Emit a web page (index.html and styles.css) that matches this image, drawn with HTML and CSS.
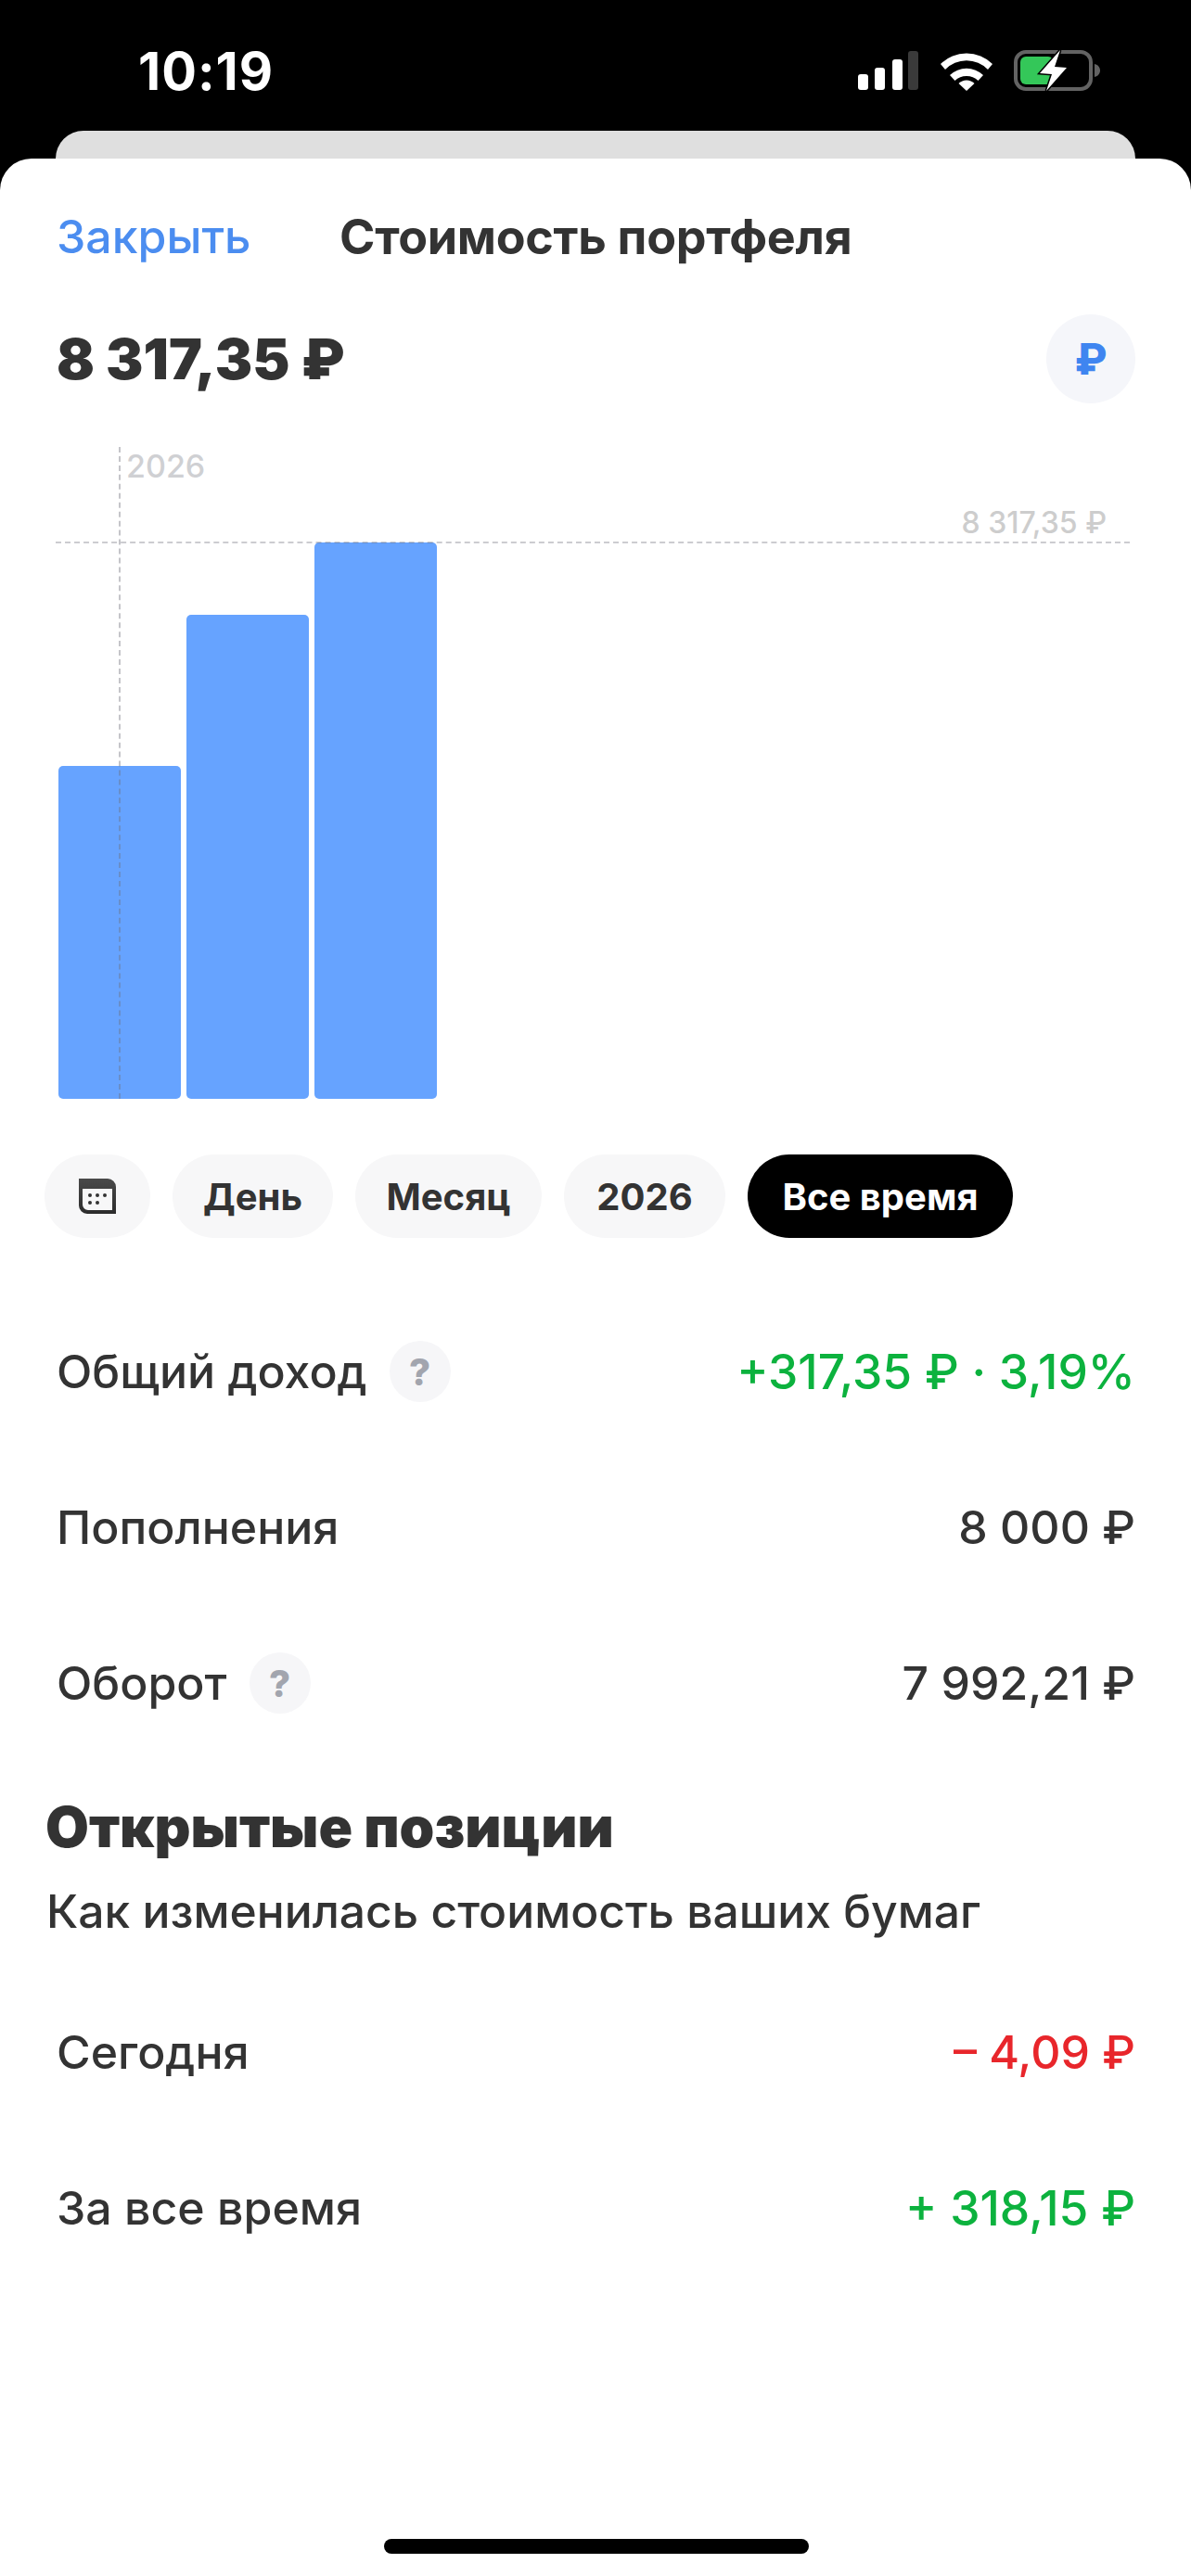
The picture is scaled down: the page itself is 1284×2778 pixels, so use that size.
FILE: index.html
```html
<!DOCTYPE html>
<html lang="ru">
<head>
    <meta charset="UTF-8">
    <meta name="viewport" content="width=device-width, initial-scale=1.0">
    <title>Стоимость портфеля</title>
    <link rel="stylesheet" href="styles.css">
</head>
<body>

    <!-- Status bar -->
    <div class="status-bar">
        <span class="status-time">10:19</span>
        <div class="status-icons">
            <svg class="signal-icon" width="65" height="42" viewBox="0 0 65 42">
                <rect x="0" y="25" width="11" height="17" rx="3" fill="#fff"/>
                <rect x="18" y="18" width="11" height="24" rx="3" fill="#fff"/>
                <rect x="37" y="9" width="11" height="33" rx="3" fill="#fff"/>
                <rect x="54" y="0" width="11" height="42" rx="3" fill="#3a3a3a"/>
            </svg>
            <svg class="wifi-icon" width="58" height="44" viewBox="0 0 58 44">
                <path d="M1 15 A40 40 0 0 1 57 15 L52 21 A32 32 0 0 0 6 21 Z" fill="#fff"/>
                <path d="M11 27 A26 26 0 0 1 47 27 L41.500 33 A18 18 0 0 0 16.500 33 Z" fill="#fff"/>
                <path d="M20.500 36 A12 12 0 0 1 37.500 36 L29 44 Z" fill="#fff"/>
            </svg>
            <svg class="battery-icon" width="96" height="46" viewBox="0 0 96 46">
                <rect x="2" y="3" width="81" height="40" rx="11" fill="none" stroke="#636363" stroke-width="4"/>
                <rect x="7" y="8" width="36" height="30" rx="6" fill="#34c759"/>
                <path d="M87 16 C91 17 93 20 93 23 C93 26 91 29 87 30 Z" fill="#636363"/>
                <path d="M50 1 L28 26 L41 27 L35 45 L57 20 L44 19 Z" fill="#fff" stroke="#000" stroke-width="3" paint-order="stroke"/>
            </svg>
        </div>
    </div>

    <div class="back-card"></div>

    <div class="sheet">
        <!-- Header -->
        <div class="sheet-header">
            <span class="close-link">Закрыть</span>
            <span class="sheet-title">Стоимость портфеля</span>
        </div>

        <div class="summary">
            <span class="summary-amount">8 317,35 ₽</span>
            <div class="currency-btn">₽</div>
        </div>

        <!-- Chart -->
        <div class="chart">
            <div class="chart-bars">
                <div class="chart-bar" style="height: 359px"></div>
                <div class="chart-bar" style="height: 522px"></div>
                <div class="chart-bar" style="height: 600px"></div>
            </div>
            <div class="chart-line-v"></div>
            <div class="chart-line-h"></div>
            <span class="chart-year">2026</span>
            <span class="chart-value">8 317,35 ₽</span>
        </div>

        <!-- Period chips -->
        <div class="chips">
            <div class="chip chip-icon">
                <svg width="40" height="38" viewBox="0 0 40 38">
                    <defs>
                        <linearGradient id="calendar-top" x1="0" y1="0" x2="0" y2="1">
                            <stop offset="0" stop-color="#4a4a4a"/>
                            <stop offset="1" stop-color="#2c2c2c"/>
                        </linearGradient>
                    </defs>
                    <path d="M0 0 H31 A9 9 0 0 1 40 9 V38 H9 A9 9 0 0 1 0 29 Z M4 11 V28 A6 6 0 0 0 10 34 H36 V11 Z" fill="url(#calendar-top)" fill-rule="evenodd"/>
                    <circle cx="12" cy="18" r="2" fill="#333"/>
                    <circle cx="20" cy="18" r="2" fill="#333"/>
                    <circle cx="28" cy="18" r="2" fill="#333"/>
                    <circle cx="12" cy="26" r="2" fill="#333"/>
                    <circle cx="20" cy="26" r="2" fill="#333"/>
                </svg>
            </div>
            <div class="chip chip-day">День</div>
            <div class="chip chip-month">Месяц</div>
            <div class="chip chip-year">2026</div>
            <div class="chip chip-all">Все время</div>
        </div>

        <!-- Totals -->
        <div class="stats">
            <div class="stat-row">
                <div class="stat-label">Общий доход <span class="help-btn">?</span></div>
                <div class="stat-value text-green">+317,35 ₽ · 3,19%</div>
            </div>
            <div class="stat-row">
                <div class="stat-label">Пополнения</div>
                <div class="stat-value">8 000 ₽</div>
            </div>
            <div class="stat-row">
                <div class="stat-label">Оборот <span class="help-btn">?</span></div>
                <div class="stat-value">7 992,21 ₽</div>
            </div>
        </div>

        <!-- Open positions -->
        <h2 class="section-title">Открытые позиции</h2>
        <p class="section-subtitle">Как изменилась стоимость ваших бумаг</p>

        <div class="stats stats-positions">
            <div class="stat-row">
                <div class="stat-label">Сегодня</div>
                <div class="stat-value text-red">– 4,09 ₽</div>
            </div>
            <div class="stat-row">
                <div class="stat-label">За все время</div>
                <div class="stat-value text-green">+ 318,15 ₽</div>
            </div>
        </div>

        <div class="home-indicator"></div>
    </div>

</body>
</html>
```

FILE: styles.css
```css
body {
    margin: 0;
    width: 1284px;
    height: 2778px;
    overflow: hidden;
    background-color: #000;
    font-family: 'Inter', 'Liberation Sans', sans-serif;
    color: #333;
}

/* Status bar */
.status-bar {
    height: 141px;
    display: flex;
    justify-content: space-between;
    align-items: flex-start;
    padding: 0 95px 0 149px;
    box-sizing: border-box;
}

.status-time {
    margin-top: 47px;
    font-size: 56px;
    line-height: 60px;
    font-weight: 700;
    color: #fff;
    letter-spacing: 1px;
}

.status-icons {
    display: flex;
    margin-top: 53px;
}

.signal-icon {
    margin: 2px 23px 0 0;
}

.wifi-icon {
    margin: 1px 22px 0 0;
}

.back-card {
    height: 30px;
    margin: 0 60px;
    background-color: #dfdfdf;
    border-radius: 30px 30px 0 0;
}

/* Sheet */
.sheet {
    position: relative;
    height: 2607px;
    background-color: #fff;
    border-radius: 34px 34px 0 0;
    overflow: hidden;
}

.sheet-header {
    display: flex;
    align-items: center;
    height: 68px;
    padding: 50px 0 0 61px;
}

.close-link {
    width: 305px;
    font-size: 50px;
    font-weight: 500;
    color: #4b8df0;
}

.sheet-title {
    font-size: 52px;
    font-weight: 700;
    letter-spacing: -0.3px;
}

.summary {
    display: flex;
    justify-content: space-between;
    align-items: center;
    height: 96px;
    margin-top: 50px;
    padding: 0 60px 0 61px;
}

.summary-amount {
    font-size: 60.500px;
    font-weight: 900;
}

.currency-btn {
    width: 96px;
    height: 96px;
    border-radius: 50%;
    background-color: #f5f6fa;
    display: flex;
    align-items: center;
    justify-content: center;
    font-size: 46px;
    font-weight: 800;
    color: #3f85f0;
}

/* Chart */
.chart {
    position: relative;
    height: 703px;
    margin-top: 47px;
}

.chart-bars {
    display: flex;
    align-items: flex-end;
    gap: 6px;
    height: 100%;
    padding-left: 63px;
}

.chart-bar {
    width: 132px;
    background-color: #66a3ff;
    border-radius: 5px;
}

.chart-line-v {
    position: absolute;
    left: 128px;
    top: 0;
    bottom: 0;
    width: 0;
    border-left: 2px dashed rgba(110, 110, 120, 0.4);
}

.chart-line-h {
    position: absolute;
    left: 60px;
    width: 1158px;
    top: 102px;
    height: 0;
    border-top: 2px dashed rgba(110, 110, 120, 0.35);
}

.chart-year {
    position: absolute;
    left: 136px;
    top: -1px;
    font-size: 34px;
    line-height: 44px;
    font-weight: 500;
    color: #cfd0d3;
}

.chart-value {
    position: absolute;
    right: 91px;
    top: 64px;
    font-size: 32px;
    line-height: 36px;
    font-weight: 500;
    color: #cdcdcd;
}

/* Period chips */
.chips {
    display: flex;
    gap: 24px;
    height: 90px;
    margin-top: 60px;
    padding-left: 48px;
}

.chip {
    display: flex;
    align-items: center;
    justify-content: center;
    height: 90px;
    border-radius: 45px;
    background-color: #f7f7f8;
    font-size: 40px;
    font-weight: 700;
}

.chip-icon {
    width: 114px;
}

.chip-day {
    width: 173px;
}

.chip-month {
    width: 201px;
}

.chip-year {
    width: 174px;
}

.chip-all {
    width: 286px;
    background-color: #000;
    color: #fff;
}

/* Rows */
.stats {
    margin-top: 60px;
    padding: 0 60px 0 61px;
}

.stats-positions {
    margin-top: 38px;
}

.stat-row {
    display: flex;
    justify-content: space-between;
    align-items: center;
    height: 168px;
    font-size: 50px;
    font-weight: 500;
}

.stat-label {
    display: flex;
    align-items: center;
}

.help-btn {
    display: flex;
    align-items: center;
    justify-content: center;
    width: 66px;
    height: 66px;
    margin-left: 24px;
    border-radius: 50%;
    background-color: #f6f6f8;
    font-size: 40px;
    font-weight: 800;
    color: #a2a5ae;
}

.text-green {
    color: #0cb23e;
    font-size: 51.500px;
}

.text-red {
    color: #e8262b;
}

.section-title {
    margin: 35px 0 0 49px;
    font-size: 60.500px;
    line-height: 72px;
    font-weight: 900;
}

.section-subtitle {
    margin: 25px 0 0 50px;
    font-size: 49.800px;
    line-height: 60px;
    font-weight: 500;
}

.home-indicator {
    position: absolute;
    left: 414px;
    bottom: 24px;
    width: 458px;
    height: 16px;
    border-radius: 8px;
    background-color: #000;
}
```
